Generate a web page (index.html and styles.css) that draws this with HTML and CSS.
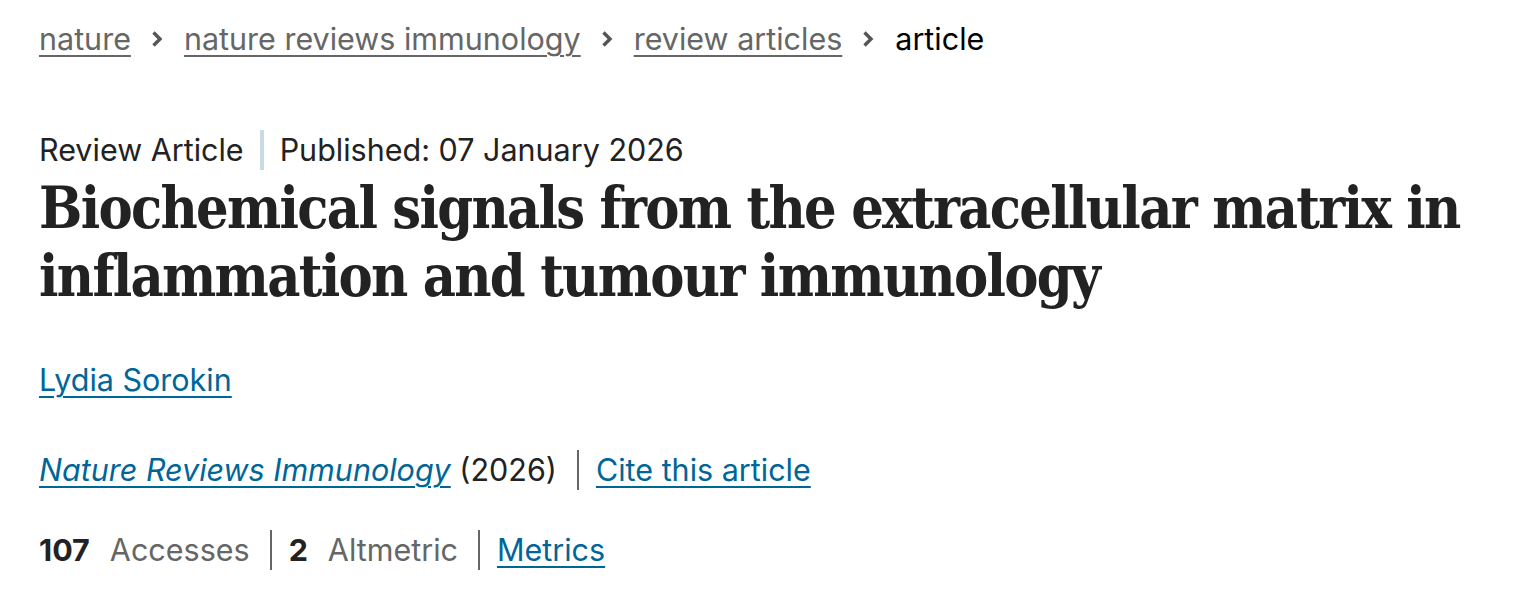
FILE: index.html
```html
<!DOCTYPE html>
<html lang="en">
<head>
<meta charset="utf-8">
<title>Biochemical signals from the extracellular matrix in inflammation and tumour immunology</title>
<link rel="stylesheet" href="styles.css">
</head>
<body>
<div class="page">
  <nav class="breadcrumbs">
    <a class="crumb" href="#">nature</a>
    <span class="chev"><svg width="14" height="20" viewBox="0 0 14 20"><path d="M2.5 3.5 L9 10 L2.5 16.5" fill="none" stroke="#555" stroke-width="3.4"/></svg></span>
    <a class="crumb" href="#">nature reviews immunology</a>
    <span class="chev"><svg width="14" height="20" viewBox="0 0 14 20"><path d="M2.5 3.5 L9 10 L2.5 16.5" fill="none" stroke="#555" stroke-width="3.4"/></svg></span>
    <a class="crumb" href="#">review articles</a>
    <span class="chev"><svg width="14" height="20" viewBox="0 0 14 20"><path d="M2.5 3.5 L9 10 L2.5 16.5" fill="none" stroke="#555" stroke-width="3.4"/></svg></span>
    <span class="current">article</span>
  </nav>

  <div class="article-info">
    <span class="type">Review Article</span>
    <span class="published">Published: 07 January 2026</span>
  </div>
  <h1 class="title">Biochemical signals from the extracellular matrix in inflammation and tumour immunology</h1>

  <div class="authors"><a href="#" class="link">Lydia Sorokin</a></div>

  <div class="citation">
    <span class="cite-part"><a href="#" class="link journal">Nature Reviews Immunology</a> (2026)</span>
    <span class="cite-part sep"><a href="#" class="link">Cite this article</a></span>
  </div>

  <div class="metrics">
    <span class="metric"><b>107</b>Accesses</span>
    <span class="metric sep"><b>2</b>Altmetric</span>
    <span class="metric sep"><a href="#" class="link">Metrics</a></span>
  </div>
</div>
</body>
</html>
```

FILE: styles.css
```css
html, body {
  margin: 0;
  padding: 0;
  background: #fff;
}
body {
  font-family: Inter, "Noto Sans", "Liberation Sans", sans-serif;
  color: #222;
  font-size: 30.5px;
}
.page {
  padding: 18px 0 0 39px;
}
.breadcrumbs {
  display: flex;
  align-items: center;
  line-height: 42px;
}
.crumb {
  color: #666;
  text-decoration: underline;
  text-underline-offset: 5px;
  text-decoration-thickness: 2px;
}
.chev {
  display: inline-flex;
  align-items: center;
  padding: 0 19px 0 20px;
  height: 42px;
}
.current {
  color: #000;
}
.article-info {
  margin-top: 70px;
  display: flex;
  align-items: center;
  line-height: 40px;
  color: #222;
}
.type {
  padding-right: 16px;
  border-right: 4px solid #cadae2;
  margin-right: 16px;
}
.title {
  margin: 4px 0 0 0;
  font-family: "DejaVu Serif Condensed", "DejaVu Serif", "Liberation Serif", serif;
  font-stretch: condensed;
  font-weight: 700;
  font-size: 57px;
  line-height: 68px;
  letter-spacing: -1.7px;
  color: #222;
  max-width: 1470px;
}
.authors {
  margin-top: 50px;
  line-height: 40px;
}
.link {
  color: #069;
  text-decoration: underline;
  text-underline-offset: 5px;
  text-decoration-thickness: 2px;
}
.journal {
  font-style: italic;
}
.citation {
  margin-top: 50px;
  display: flex;
  align-items: center;
  line-height: 40px;
  color: #222;
}
.sep {
  border-left: 2px solid #666;
  margin-left: 20px;
  padding-left: 17px;
}
.metrics {
  margin-top: 40px;
  display: flex;
  align-items: center;
  line-height: 40px;
  color: #666;
}
.metric b {
  color: #222;
  font-weight: 700;
  margin-right: 20px;
}
```
